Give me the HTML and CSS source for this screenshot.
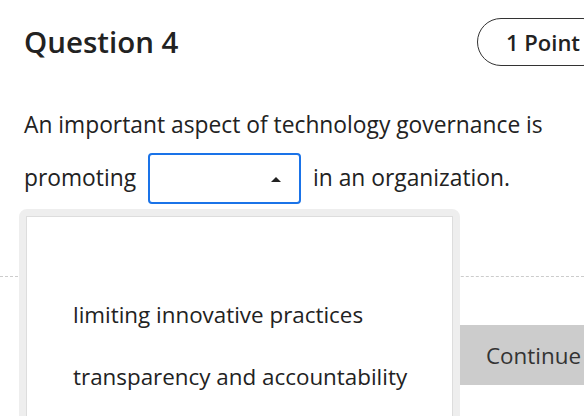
FILE: index.html
```html
<!DOCTYPE html>
<html>
<head>
<meta charset="utf-8">
<link rel="stylesheet" href="styles.css">
</head>
<body>
<div class="page">
  <header class="head">
    <h1 class="title">Question 4</h1>
    <div class="points">1 Point</div>
  </header>
  <div class="question">
    <p class="line">An important aspect of technology governance is</p>
    <p class="line">promoting <span class="select"><span class="arrow"></span></span> in an organization.</p>
  </div>
  <div class="footer">
    <hr class="rule">
    <div class="actions"><button class="continue">Continue</button></div>
  </div>
  <div class="menu">
    <ul class="options">
      <li class="option"></li>
      <li class="option">limiting innovative practices</li>
      <li class="option">transparency and accountability</li>
    </ul>
  </div>
</div>
</body>
</html>
```
FILE: styles.css
```css
html, body {
  margin: 0;
  padding: 0;
  overflow: hidden;
  background: #fff;
}
body {
  font-family: "Open Sans", "DejaVu Sans", sans-serif;
  color: #222;
  width: 584px;
  height: 416px;
}
.page {
  position: relative;
  width: 584px;
  height: 416px;
}
.head {
  display: flex;
  justify-content: space-between;
  align-items: center;
  padding: 18px 0 0 24px;
  height: 48px;
}
.title {
  margin: 0;
  font-size: 29.5px;
  font-weight: 600;
  line-height: 48px;
}
.points {
  box-sizing: border-box;
  height: 48px;
  width: 130px;
  margin-right: -23px;
  border: 1px solid #333;
  border-radius: 24px;
  padding-left: 28px;
  font-size: 22px;
  font-weight: 600;
  line-height: 46px;
}
.question {
  padding: 44px 24px 0 24px;
  font-size: 22.8px;
}
.line {
  margin: 0;
  height: 52px;
  line-height: 52px;
  display: flex;
  align-items: center;
}
.line:first-child {
  height: 30px;
  line-height: 30px;
}
.line:last-child {
  margin-top: 12px;
}
.select {
  box-sizing: border-box;
  display: inline-block;
  width: 153px;
  height: 51px;
  border: 2px solid #1a73e8;
  border-radius: 4px;
  margin: 0 12px 0 12px;
  position: relative;
}
.arrow {
  position: absolute;
  right: 18px;
  top: 22px;
  width: 0;
  height: 0;
  border-left: 5px solid transparent;
  border-right: 5px solid transparent;
  border-bottom: 5px solid #222;
}
.footer {
  margin-top: 72px;
}
.rule {
  margin: 0;
  border: 0;
  border-top: 1px dashed #ccc;
}
.actions {
  display: flex;
  justify-content: flex-end;
  padding-top: 48px;
}
.continue {
  width: 125px;
  height: 60px;
  border: 0;
  background: #ccc;
  color: #333;
  font-family: "Open Sans", "DejaVu Sans", sans-serif;
  font-size: 22.4px;
  text-align: left;
  padding: 0 0 0 27px;
  margin-right: 0;
}
.menu {
  position: absolute;
  left: 19px;
  top: 209px;
  width: 441px;
  height: 220px;
  box-sizing: border-box;
  border: 7px solid #eee;
  border-radius: 8px;
}
.options {
  list-style: none;
  margin: 0;
  padding: 0;
  background: #fff;
  border: 1px solid #ddd;
  height: 100%;
  box-sizing: border-box;
}
.option {
  height: 62px;
  line-height: 62px;
  padding-left: 46px;
  font-size: 22.4px;
  color: #222;
}
.option:first-child {
  margin-top: 5px;
}
```
